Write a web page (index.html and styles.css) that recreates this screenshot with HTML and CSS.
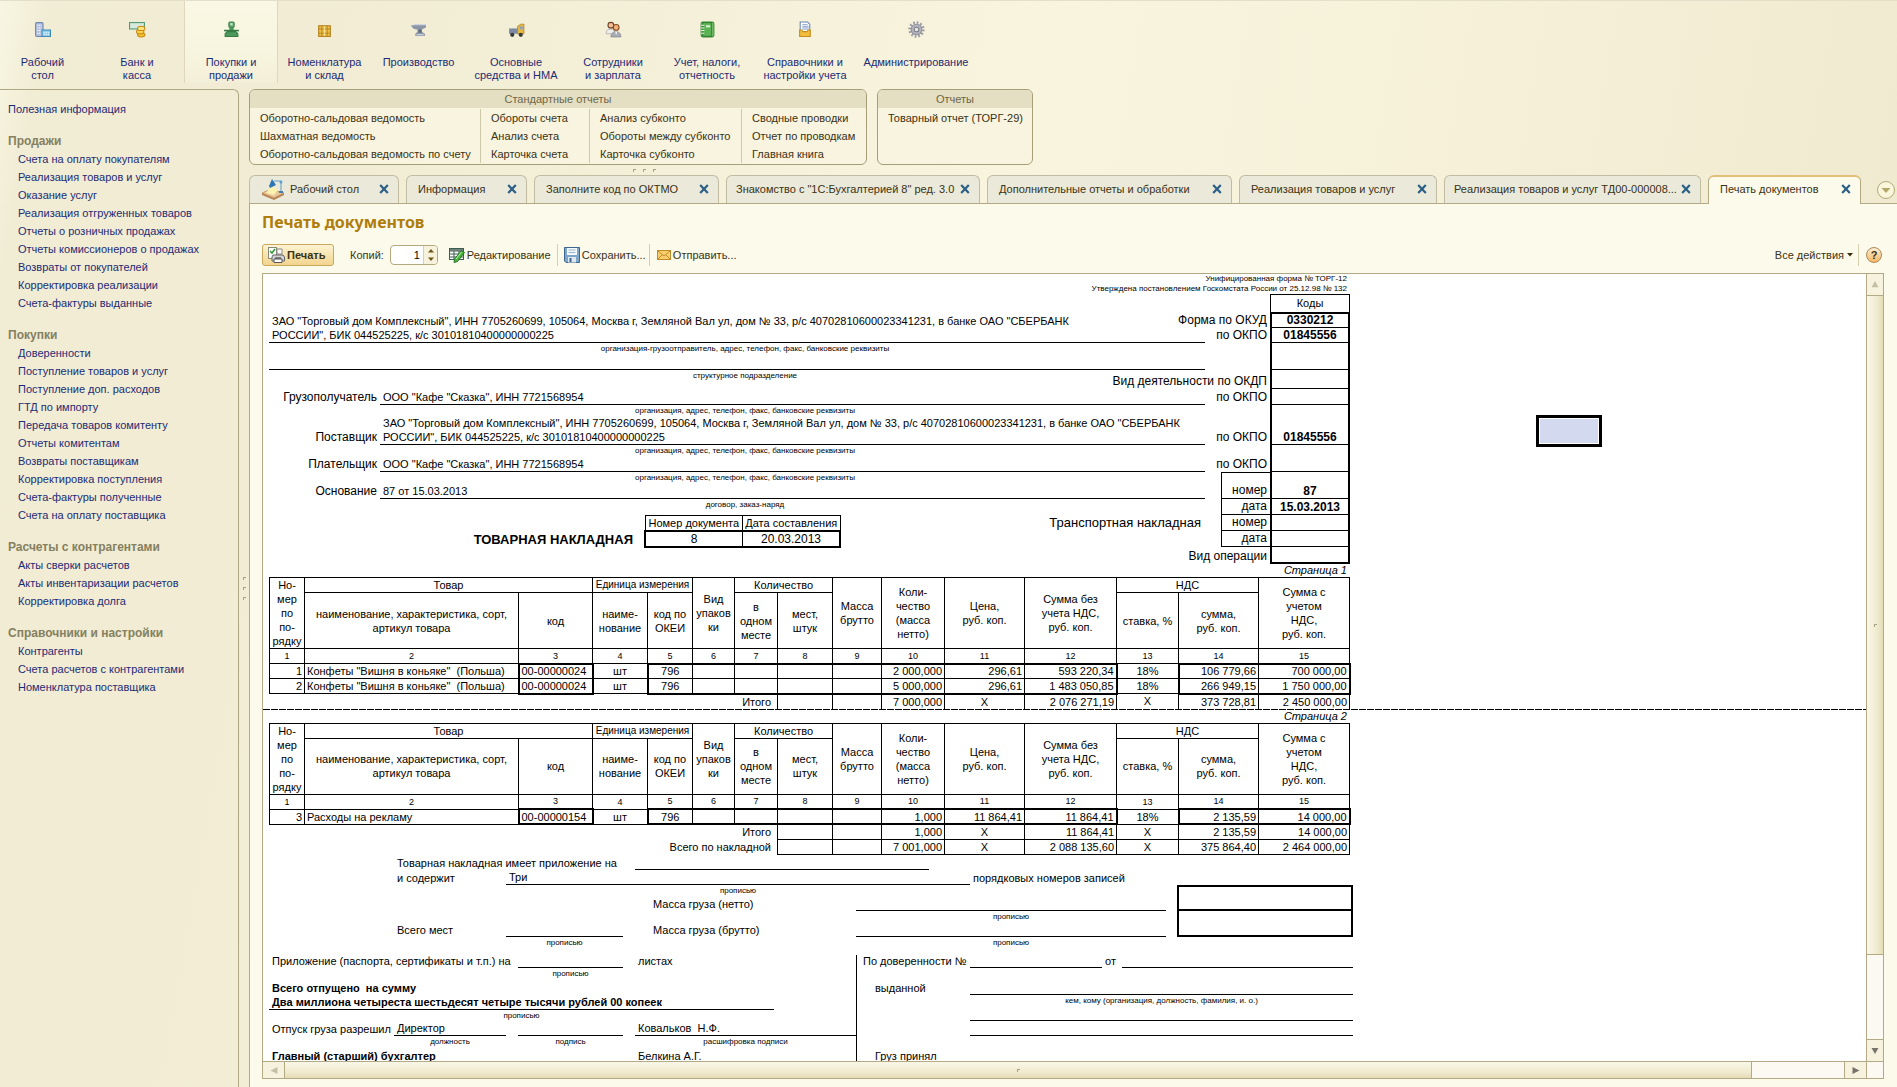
FILE: index.html
```html
<!DOCTYPE html>
<html lang="ru">
<head>
<meta charset="utf-8">
<title>Печать документов</title>
<link rel="stylesheet" href="styles.css">
</head>
<body>
<svg class="defs" aria-hidden="true">
  <symbol id="close" viewBox="0 0 10 10"><path d="M1.200 1l7.600 8M8.800 1L1.200 9" fill="none" stroke="#2b5f86" stroke-width="2.200"/></symbol>
</svg>
<nav class="sections">
  <a class="section" href="#"><svg viewBox="0 0 16 16"><rect x="1.5" y="1.500" width="7" height="13" rx="1" fill="#b5c1dc" stroke="#7286b2"/><path d="M3 4h4M3 6.500h4M3 9h4M3 11.500h4" stroke="#fff" stroke-dasharray="1 .6"/><rect x="7.500" y="8.500" width="8" height="6" fill="#8fd0ec" stroke="#3d86b8"/><path d="M9 11h5M9 13h5" stroke="#fff" stroke-dasharray="1 1"/></svg><span>Рабочий<br>стол</span></a>
  <a class="section" href="#"><svg viewBox="0 0 16 16"><rect x=".5" y="1.500" width="14" height="6" fill="#d7eadb" stroke="#4c9773"/><ellipse cx="11.500" cy="13" rx="3.500" ry="2" fill="#f0c02e" stroke="#c68a13"/><ellipse cx="10.500" cy="10" rx="3.500" ry="2" fill="#f9d34f" stroke="#c68a13"/><ellipse cx="11.500" cy="7" rx="3.500" ry="2" fill="#ffe681" stroke="#c68a13"/></svg><span>Банк и<br>касса</span></a>
  <a class="section current" href="#"><svg viewBox="0 0 16 16"><rect x="5.500" y="1" width="5" height="5" rx="1" fill="#69ad72" stroke="#3a7d49"/><rect x="7" y="2" width="2" height="2" fill="#cfe9cf"/><path d="M6 6h4v4H6z" fill="#4b9a5b"/><path d="M1 9h14" stroke="#357b46" stroke-width="1.500"/><path d="M4 10h8l2 2v2.500H2V12z" fill="#4b9a5b" stroke="#357b46"/></svg><span>Покупки и<br>продажи</span></a>
  <a class="section" href="#"><svg viewBox="0 0 16 16"><rect x="2.500" y="4.500" width="11" height="10" fill="#f0c14c" stroke="#b07f1a"/><path d="M2 7.500h12M2 11.500h12M5.500 4v11M10.500 4v11" stroke="#b98a22"/><path d="M8 5v9" stroke="#f9df8d"/></svg><span>Номенклатура<br>и склад</span></a>
  <a class="section" href="#"><svg viewBox="0 0 16 16"><path d="M1 4h3V3h11v3l-4 2v2l3 2v2H5v-2l2-2V8C4 8 2 7 1 4z" fill="#8b95a5"/><path d="M4 3.500h11M6 13h7" stroke="#dce3ec"/><path d="M8 8h3v3H8z" fill="#5f6a7c"/></svg><span>Производство</span></a>
  <a class="section" href="#"><svg viewBox="0 0 16 16"><rect x="1" y="7" width="8" height="5" fill="#7d8aa2"/><path d="M9 12V5l3-2h3v9z" fill="#e9ba42" stroke="#a87d1d" stroke-width=".7"/><rect x="11" y="5" width="3" height="3" fill="#8fa3b8"/><circle cx="4" cy="13" r="2" fill="#3b3b3b"/><circle cx="12" cy="13" r="2" fill="#3b3b3b"/></svg><span>Основные<br>средства и НМА</span></a>
  <a class="section" href="#"><svg viewBox="0 0 16 16"><circle cx="5.500" cy="4" r="2.700" fill="#f2c19a" stroke="#6d3f24"/><path d="M1 12c0-3 2-4.500 4.500-4.500S9 9 9 12z" fill="#eee" stroke="#999" stroke-width=".6"/><circle cx="10.500" cy="6" r="2.700" fill="#efb17c" stroke="#8b4a1e"/><path d="M5.500 15c0-3 2-5 5-5s4.500 2 4.500 5z" fill="#a9adb4" stroke="#7d8087" stroke-width=".6"/><path d="M9.500 10h2l-1 3z" fill="#fff"/></svg><span>Сотрудники<br>и зарплата</span></a>
  <a class="section" href="#"><svg viewBox="0 0 16 16"><rect x="2" y="1" width="12" height="14" rx="1.500" fill="#8bce7d" stroke="#3d8b39"/><rect x="3.500" y="1.500" width="8.500" height="13" fill="#5cb355" stroke="#2f7d30"/><path d="M6.500 4h4v2h-4z" fill="#d8f2cf"/><path d="M2 4h3M2 6.500h3M2 9h3M2 11.500h3" stroke="#e2f4dc"/></svg><span>Учет, налоги,<br>отчетность</span></a>
  <a class="section" href="#"><svg viewBox="0 0 16 16"><path d="M3 1h7l2 2v8H3z" fill="#fff" stroke="#6a86b5"/><path d="M5 3.500h5M5 5.500h6M5 7.500h6" stroke="#7f9ac8"/><path d="M2.500 8.500h2l1 1.500h4l1-1.500h2v6h-10z" fill="#f3be3e" stroke="#c58d1b"/></svg><span>Справочники и<br>настройки учета</span></a>
  <a class="section" href="#"><svg viewBox="0 0 16 16"><circle cx="8" cy="8" r="6.500" fill="none" stroke="#9b9ca6" stroke-width="2.400" stroke-dasharray="1.700 1.700"/><circle cx="8" cy="8" r="5" fill="#b4b5be" stroke="#8e8f99"/><circle cx="8" cy="8" r="2.200" fill="#e9e8e4" stroke="#7f808b"/></svg><span>Администрирование</span></a>
</nav>
<div class="body">
  <nav class="sidebar">
    <a class="top" href="#">Полезная информация</a>
    <h2>Продажи</h2>
    <a href="#">Счета на оплату покупателям</a><a href="#">Реализация товаров и услуг</a><a href="#">Оказание услуг</a><a href="#">Реализация отгруженных товаров</a><a href="#">Отчеты о розничных продажах</a><a href="#">Отчеты комиссионеров о продажах</a><a href="#">Возвраты от покупателей</a><a href="#">Корректировка реализации</a><a href="#">Счета-фактуры выданные</a>
    <h2>Покупки</h2>
    <a href="#">Доверенности</a><a href="#">Поступление товаров и услуг</a><a href="#">Поступление доп. расходов</a><a href="#">ГТД по импорту</a><a href="#">Передача товаров комитенту</a><a href="#">Отчеты комитентам</a><a href="#">Возвраты поставщикам</a><a href="#">Корректировка поступления</a><a href="#">Счета-фактуры полученные</a><a href="#">Счета на оплату поставщика</a>
    <h2>Расчеты с контрагентами</h2>
    <a href="#">Акты сверки расчетов</a><a href="#">Акты инвентаризации расчетов</a><a href="#">Корректировка долга</a>
    <h2>Справочники и настройки</h2>
    <a href="#">Контрагенты</a><a href="#">Счета расчетов с контрагентами</a><a href="#">Номенклатура поставщика</a>
  </nav>
  <div class="splitter"><i></i><i></i><i></i></div>
  <main class="work">
    <div class="reports">
      <section class="group standard">
        <h3>Стандартные отчеты</h3>
        <div class="cols">
          <div><a href="#">Оборотно-сальдовая ведомость</a><a href="#">Шахматная ведомость</a><a href="#">Оборотно-сальдовая ведомость по счету</a></div>
          <div><a href="#">Обороты счета</a><a href="#">Анализ счета</a><a href="#">Карточка счета</a></div>
          <div><a href="#">Анализ субконто</a><a href="#">Обороты между субконто</a><a href="#">Карточка субконто</a></div>
          <div><a href="#">Сводные проводки</a><a href="#">Отчет по проводкам</a><a href="#">Главная книга</a></div>
        </div>
      </section>
      <section class="group extra">
        <h3>Отчеты</h3>
        <div class="cols"><div><a href="#">Товарный отчет (ТОРГ-29)</a></div></div>
      </section>
    </div>
    <div class="hsplit"><i></i><i></i><i></i></div>
    <div class="tabs">
      <div class="tab t1"><svg class="desk" viewBox="0 0 24 22"><path d="M1 15l9-4 13 4-10 5z" fill="#e9c79a" stroke="#b98a55" stroke-width=".7"/><path d="M1 15v2l12 5v-2zM23 15v2l-10 5v-2z" fill="#b98453"/><path d="M10 8l-5 7 8 2 4-5z" fill="#fdf3b0"/><path d="M11 1l4 6-6 3-1-2z" fill="#2e77b4"/><path d="M13 3h7v10" fill="none" stroke="#5f9cc8"/><circle cx="20" cy="4" r="1.500" fill="#5aa0d0"/><path d="M18 14h4" stroke="#3b7fb5" stroke-width="2"/></svg><a href="#">Рабочий стол</a><button aria-label="Закрыть"><svg><use href="#close"/></svg></button></div>
      <div class="tab t2"><a href="#">Информация</a><button aria-label="Закрыть"><svg><use href="#close"/></svg></button></div>
      <div class="tab t3"><a href="#">Заполните код по ОКТМО</a><button aria-label="Закрыть"><svg><use href="#close"/></svg></button></div>
      <div class="tab t4"><a href="#">Знакомство с "1С:Бухгалтерией 8" ред. 3.0</a><button aria-label="Закрыть"><svg><use href="#close"/></svg></button></div>
      <div class="tab t5"><a href="#">Дополнительные отчеты и обработки</a><button aria-label="Закрыть"><svg><use href="#close"/></svg></button></div>
      <div class="tab t6"><a href="#">Реализация товаров и услуг</a><button aria-label="Закрыть"><svg><use href="#close"/></svg></button></div>
      <div class="tab t7"><a href="#">Реализация товаров и услуг ТД00-000008...</a><button aria-label="Закрыть"><svg><use href="#close"/></svg></button></div>
      <div class="tab t8 active"><a href="#">Печать документов</a><button aria-label="Закрыть"><svg><use href="#close"/></svg></button></div>
      <button class="more" aria-label="Список окон"><svg viewBox="0 0 20 20"><circle cx="10" cy="10" r="8.500" fill="#faf6dc" stroke="#b3a878"/><path d="M5.500 8h9L10 13z" fill="#b3a868"/></svg></button>
    </div>
    <div class="pane">
      <h1>Печать документов</h1>
      <div class="toolbar">
        <button class="print"><svg viewBox="0 0 17 17"><rect x=".5" y=".5" width="8" height="11" fill="#fff" stroke="#8a8a7a"/><path d="M2 4l2 2 3-4" fill="none" stroke="#2f9a3a" stroke-width="1.500"/><path d="M9 2h5v5H9z" fill="#fff" stroke="#888"/><path d="M5 8h10l1.500 2v4H4v-4z" fill="#d3d3d3" stroke="#666"/><path d="M6 12h8v3.500H6z" fill="#fff" stroke="#555"/><path d="M7 11h6" stroke="#333"/></svg>Печать</button>
        <label for="copies">Копий:</label>
        <span class="spin"><input id="copies" type="text" value="1"><span class="arrows"><svg viewBox="0 0 14 18"><path d="M4 6.500h6L7 3zM4 11.500h6L7 15z" fill="#6e5518"/></svg></span></span>
        <button class="cmd edit"><svg viewBox="0 0 16 16"><rect x=".5" y="1.500" width="14" height="11" fill="#fff" stroke="#3d5e50"/><path d="M1 4h13M1 7h13M1 10h13M5 2v10M10 2v10" stroke="#3d5e50"/><path d="M1 2h13v2H1z" fill="#6f7f7a"/><path d="M12.500 3.500l3 2-7 9-3.500 1 .5-3.500z" fill="#49b83a" stroke="#23752a"/><path d="M7 12l5.500-7" stroke="#bff0a6"/></svg>Редактирование</button>
        <button class="cmd save"><svg viewBox="0 0 16 16"><path d="M.5.5h15v15H2l-1.500-1.500z" fill="#7fa6c9" stroke="#3d678f"/><rect x="3" y="1" width="10" height="7" fill="#f4f8fb"/><path d="M4.500 3h7M4.500 5.500h7" stroke="#9cb6cd"/><rect x="4" y="10" width="8" height="5.500" fill="#dfe8ef"/><rect x="5.500" y="11" width="2" height="4" fill="#3d678f"/></svg>Сохранить...</button>
        <button class="cmd mail"><svg viewBox="0 0 14 10"><rect x=".5" y=".5" width="13" height="9" fill="#f9ce6c" stroke="#c08a2a"/><path d="M1 1l6 5 6-5M1 9l4-4M13 9L9 5" fill="none" stroke="#c08a2a"/></svg>Отправить...</button>
        <button class="cmd all">Все действия<svg viewBox="0 0 6 4"><path d="M0 0h6L3 3.500z" fill="#3a2f10"/></svg></button>
        <button class="help" aria-label="Справка">?</button>
      </div>
      <div class="viewer">
        <div class="sheet">
          <div class="paper">
            <div class="form">
              <p class="legal">Унифицированная форма № ТОРГ-12<br>Утверждена постановлением Госкомстата России от 25.12.98 № 132</p>
              <div class="code c2">Коды</div>
              <div class="codes"></div>
              <div class="code c3">0330212</div><div class="code c4">01845556</div><div class="code c5"></div><div class="code c6"></div><div class="code c7"></div><div class="code c8">01845556</div><div class="code c9"></div><div class="code c10">87</div><div class="code c11">15.03.2013</div><div class="code c12"></div><div class="code c13"></div>
              <div class="lab l3">Форма по ОКУД</div><div class="lab l4">по ОКПО</div><div class="lab l6">Вид деятельности по ОКДП</div><div class="lab l7">по ОКПО</div><div class="lab l8">по ОКПО</div><div class="lab l9">по ОКПО</div>
              <div class="lab box l10">номер</div><div class="lab box l11">дата</div><div class="lab box l12">номер</div><div class="lab box l13">дата</div><div class="lab l14">Вид операции</div>
              <div class="fill f4">ЗАО "Торговый дом Комплексный", ИНН 7705260699, 105064, Москва г, Земляной Вал ул, дом № 33, р/с 40702810600023341231, в банке ОАО "СБЕРБАНК<br>РОССИИ", БИК 044525225, к/с 30101810400000000225</div>
              <div class="cap k5">организация-грузоотправитель, адрес, телефон, факс, банковские реквизиты</div>
              <div class="fill f5"></div>
              <div class="cap k6">структурное подразделение</div>
              <div class="who w7">Грузополучатель</div><div class="fill f7">ООО "Кафе "Сказка", ИНН 7721568954</div>
              <div class="cap k8">организация, адрес, телефон, факс, банковские реквизиты</div>
              <div class="who w8">Поставщик</div><div class="fill f8">ЗАО "Торговый дом Комплексный", ИНН 7705260699, 105064, Москва г, Земляной Вал ул, дом № 33, р/с 40702810600023341231, в банке ОАО "СБЕРБАНК<br>РОССИИ", БИК 044525225, к/с 30101810400000000225</div>
              <div class="cap k9">организация, адрес, телефон, факс, банковские реквизиты</div>
              <div class="who w9">Плательщик</div><div class="fill f9">ООО "Кафе "Сказка", ИНН 7721568954</div>
              <div class="cap k10">организация, адрес, телефон, факс, банковские реквизиты</div>
              <div class="who w10">Основание</div><div class="fill f10">87 от 15.03.2013</div>
              <div class="cap k11">договор, заказ-наряд</div>
              <div class="number">
                <strong>ТОВАРНАЯ НАКЛАДНАЯ</strong>
                <table><tr><th>Номер документа</th><th>Дата составления</th></tr><tr><td>8</td><td>20.03.2013</td></tr></table>
                <span>Транспортная накладная</span>
              </div>
            </div>
            <p class="pageno">Страница 1</p>
            <table class="goods">
              <colgroup><col class="w35"><col class="w214"><col class="w74"><col class="w55"><col class="w45"><col class="w42"><col class="w43"><col class="w55"><col class="w49"><col class="w63"><col class="w80"><col class="w92"><col class="w62"><col class="w80"><col class="w91"></colgroup>
              <thead>
              <tr><th rowspan="2">Но-<br>мер<br>по<br>по-<br>рядку</th><th colspan="2">Товар</th><th class="tight" colspan="2">Единица измерения</th><th rowspan="2">Вид<br>упаков<br>ки</th><th colspan="2">Количество</th><th rowspan="2">Масса<br>брутто</th><th rowspan="2">Коли-<br>чество<br>(масса<br>нетто)</th><th rowspan="2">Цена,<br>руб. коп.</th><th rowspan="2">Сумма без<br>учета НДС,<br>руб. коп.</th><th colspan="2">НДС</th><th rowspan="2">Сумма с<br>учетом<br>НДС,<br>руб. коп.</th></tr>
              <tr class="sub"><th>наименование, характеристика, сорт,<br>артикул товара</th><th>код</th><th>наиме-<br>нование</th><th>код по<br>ОКЕИ</th><th>в<br>одном<br>месте</th><th>мест,<br>штук</th><th>ставка, %</th><th>сумма,<br>руб. коп.</th></tr>
              <tr class="nums"><th>1</th><th>2</th><th>3</th><th>4</th><th>5</th><th>6</th><th>7</th><th>8</th><th>9</th><th>10</th><th>11</th><th>12</th><th>13</th><th>14</th><th>15</th></tr>
              </thead>
              <tbody>
              <tr class="first"><td>1</td><td class="l">Конфеты "Вишня в коньяке" &nbsp;(Польша)</td><td class="l tl tr">00-00000024</td><td class="c">шт</td><td class="c tl">796</td><td></td><td></td><td></td><td></td><td>2 000,000</td><td>296,61</td><td class="tr">593 220,34</td><td class="c">18%</td><td class="tl">106 779,66</td><td class="tr">700 000,00</td></tr>
              <tr class="last"><td>2</td><td class="l">Конфеты "Вишня в коньяке" &nbsp;(Польша)</td><td class="l tl tr">00-00000024</td><td class="c">шт</td><td class="c tl">796</td><td></td><td></td><td></td><td></td><td>5 000,000</td><td>296,61</td><td class="tr">1 483 050,85</td><td class="c">18%</td><td class="tl">266 949,15</td><td class="tr">1 750 000,00</td></tr>
              <tr class="total open"><td class="n" colspan="7">Итого</td><td></td><td></td><td>7 000,000</td><td class="c">Х</td><td>2 076 271,19</td><td class="c">Х</td><td>373 728,81</td><td>2 450 000,00</td></tr>
              </tbody>
            </table>
          </div>
          <div class="break"></div>
          <div class="paper">
            <p class="pageno">Страница 2</p>
            <table class="goods">
              <colgroup><col class="w35"><col class="w214"><col class="w74"><col class="w55"><col class="w45"><col class="w42"><col class="w43"><col class="w55"><col class="w49"><col class="w63"><col class="w80"><col class="w92"><col class="w62"><col class="w80"><col class="w91"></colgroup>
              <thead>
              <tr><th rowspan="2">Но-<br>мер<br>по<br>по-<br>рядку</th><th colspan="2">Товар</th><th class="tight" colspan="2">Единица измерения</th><th rowspan="2">Вид<br>упаков<br>ки</th><th colspan="2">Количество</th><th rowspan="2">Масса<br>брутто</th><th rowspan="2">Коли-<br>чество<br>(масса<br>нетто)</th><th rowspan="2">Цена,<br>руб. коп.</th><th rowspan="2">Сумма без<br>учета НДС,<br>руб. коп.</th><th colspan="2">НДС</th><th rowspan="2">Сумма с<br>учетом<br>НДС,<br>руб. коп.</th></tr>
              <tr class="sub"><th>наименование, характеристика, сорт,<br>артикул товара</th><th>код</th><th>наиме-<br>нование</th><th>код по<br>ОКЕИ</th><th>в<br>одном<br>месте</th><th>мест,<br>штук</th><th>ставка, %</th><th>сумма,<br>руб. коп.</th></tr>
              <tr class="nums"><th>1</th><th>2</th><th>3</th><th>4</th><th>5</th><th>6</th><th>7</th><th>8</th><th>9</th><th>10</th><th>11</th><th>12</th><th>13</th><th>14</th><th>15</th></tr>
              </thead>
              <tbody>
              <tr class="first last"><td>3</td><td class="l">Расходы на рекламу</td><td class="l tl tr">00-00000154</td><td class="c">шт</td><td class="c tl">796</td><td></td><td></td><td></td><td></td><td>1,000</td><td>11 864,41</td><td class="tr">11 864,41</td><td class="c">18%</td><td class="tl">2 135,59</td><td class="tr">14 000,00</td></tr>
              <tr class="total"><td class="n" colspan="7">Итого</td><td></td><td></td><td>1,000</td><td class="c">Х</td><td>11 864,41</td><td class="c">Х</td><td>2 135,59</td><td>14 000,00</td></tr>
              <tr class="total"><td class="n" colspan="7">Всего по накладной</td><td></td><td></td><td>7 001,000</td><td class="c">Х</td><td>2 088 135,60</td><td class="c">Х</td><td>375 864,40</td><td>2 464 000,00</td></tr>
              </tbody>
            </table>
            <div class="sign">
              <div class="s1 from2">Товарная накладная имеет приложение на</div><div class="s1 u annex"></div>
              <div class="s2 from2">и содержит</div><div class="s2 u contains">Три</div><div class="s2 from9">порядковых номеров записей</div>
              <div class="cap s3 contains">прописью</div>
              <div class="s3 from6 mass">Масса груза (нетто)</div><div class="s3 u weight"></div><div class="s3 cell"></div>
              <div class="cap s4 weight">прописью</div>
              <div class="s4 from2">Всего мест</div><div class="s4 u places"></div><div class="s4 from6 mass">Масса груза (брутто)</div><div class="s4 u weight"></div><div class="s4 cell"></div>
              <div class="cap s5 places">прописью</div><div class="cap s5 weight">прописью</div>
              <div class="rule"></div>
              <div class="s6 from1">Приложение (паспорта, сертификаты и т.п.) на</div><div class="s6 u short"></div><div class="s6 from6">листах</div>
              <div class="s6 from7">По доверенности №</div><div class="s6 u proxy"></div><div class="s6 from10">от</div><div class="s6 u date"></div>
              <div class="cap s7 short">прописью</div>
              <div class="s7 from1 b">Всего отпущено &nbsp;на сумму</div><div class="s7 from7 deep">выданной</div><div class="s7 u right"></div>
              <div class="cap s8 right">кем, кому (организация, должность, фамилия, и. о.)</div>
              <div class="s8 u sum b">Два миллиона четыреста шестьдесят четыре тысячи рублей 00 копеек</div>
              <div class="cap s9 sum">прописью</div><div class="s9 u right"></div>
              <div class="s10 from1">Отпуск груза разрешил</div><div class="s10 u post">Директор</div><div class="s10 u short"></div><div class="s10 u name">Ковальков &nbsp;Н.Ф.</div><div class="s10 u right"></div>
              <div class="cap s11 post">должность</div><div class="cap s11 short">подпись</div><div class="cap s11 name">расшифровка подписи</div>
              <div class="s11 from1 b">Главный (старший) бухгалтер</div><div class="s11 from6">Белкина А.Г.</div><div class="s11 from7 deep">Груз принял</div>
            </div>
          </div>
          <div class="cursor"></div>
        </div>
        <div class="vbar"><button aria-label="Вверх"><svg viewBox="0 0 8 8"><path d="M0 7h8L4 0z" fill="#c5bfa6"/></svg></button><div class="thumb"><i></i></div><div class="track"></div><button aria-label="Вниз"><svg viewBox="0 0 8 8"><path d="M0 1h8L4 8z" fill="#77736a"/></svg></button></div>
        <div class="hbar"><button aria-label="Влево"><svg viewBox="0 0 8 8"><path d="M8 0v8L0 4z" fill="#c5bfa6"/></svg></button><div class="thumb"><i></i></div><div class="track"></div><button aria-label="Вправо"><svg viewBox="0 0 8 8"><path d="M0 0v8l8-4z" fill="#77736a"/></svg></button></div>
        <div class="corner"></div>
      </div>
    </div>
  </main>
</div>
</body>
</html>
```
FILE: styles.css
```css
* { box-sizing: border-box; }
html, body { height: 100%; }
body {
  margin: 0;
  display: flex;
  flex-direction: column;
  overflow: hidden;
  font: 11px/18px "Liberation Sans", Arial, sans-serif;
  color: #3a3214;
  background: linear-gradient(100deg, #f8f6e3 0, #f1ecd4 50px, #f1ecd3 15%, #f8f4de 50%, #f7f2da 65%, #efe9cf 96%, #f6f2de 100%);
}
a { color: inherit; text-decoration: none; white-space: nowrap; }
h1, h2, h3, p { margin: 0; }
button { font: inherit; color: inherit; border: 0; padding: 0; background: none; }
svg { display: block; flex: none; }
.defs { position: absolute; width: 0; height: 0; }

/* sections */
.sections {
  flex: none;
  display: grid;
  grid-template-columns: 90px 94px 94px 93px 95px 100px 94px 94px 102px 120px;
  height: 89px;
  border-top: 1px solid #e3dfc8;
  color: #1d2b74;
}
.section {
  display: flex;
  flex-direction: column;
  align-items: center;
  gap: 18px;
  padding-top: 20px;
  height: 82px;
  line-height: 13px;
  text-align: center;
}
.section:first-child { padding-right: 5px; }
.section svg { width: 17px; height: 17px; }
.section.current {
  background: linear-gradient(#faf8e4, #f7f4de 70%, #f3eed7);
  border: solid #dcd7bd;
  border-width: 0 1px;
}

.body { flex: 1; display: flex; min-height: 0; }

/* sidebar */
.sidebar {
  flex: none;
  width: 239px;
  padding: 10px 8px;
  display: flex;
  flex-direction: column;
  border: solid #b0a783;
  border-width: 1px 1px 0 0;
  border-radius: 0 6px 0 0;
  color: #1d2b74;
}
.sidebar a { padding-left: 10px; }
.sidebar .top { padding-left: 0; }
.sidebar h2 { margin-top: 14px; font-size: 12px; line-height: 18px; color: #858060; }
.splitter {
  flex: none;
  width: 10px;
  display: flex;
  flex-direction: column;
  align-items: center;
  justify-content: center;
  gap: 7px;
}
.splitter i, .hsplit i, .thumb i { width: 3px; height: 3px; border: solid #a8a284; border-width: 1px 0 0 1px; }

/* reports */
.work { flex: 1; min-width: 0; display: flex; flex-direction: column; }
.reports { flex: none; display: flex; gap: 10px; height: 76px; }
.group { border: 1px solid #a69d79; border-radius: 6px; overflow: hidden; background: #f8f4df; }
.group h3 { height: 18px; background: #e4dec3; font-size: 11px; font-weight: normal; line-height: 19px; text-align: center; color: #6d6746; }
.standard { width: 618px; }
.extra { width: 156px; }
.cols { display: flex; padding-top: 1px; }
.cols div { display: flex; flex-direction: column; padding: 0 10px; border-left: 1px solid #cfc9ab; }
.cols div:first-child { border-left: 0; }
.standard .cols div:nth-child(1) { width: 230px; }
.standard .cols div:nth-child(2) { width: 109px; }
.standard .cols div:nth-child(3) { width: 152px; }
.hsplit { flex: none; height: 10px; width: 790px; display: flex; justify-content: center; align-items: center; gap: 7px; }

/* tabs */
.tabs { flex: none; display: flex; height: 29px; gap: 7px; padding-right: 1px; }
.tab {
  display: flex;
  align-items: center;
  justify-content: space-between;
  min-width: 0;
  margin-bottom: 1px;
  padding: 0 9px 1px 11px;
  border: 1px solid #c1bba2;
  border-bottom: 0;
  border-radius: 6px 6px 0 0;
  background: #eae9da;
}
.tab svg { width: 10px; height: 10px; }
.tab svg.desk { width: 24px; height: 22px; margin-right: 5px; }
.tab.t1 { justify-content: flex-start; }
.tab.t1 button { margin-left: auto; }
.t1 { width: 150px; }
.t2 { width: 121px; }
.t3 { width: 185px; }
.t4 { width: 254px; }
.t5 { width: 245px; }
.t6 { width: 198px; }
.t7 { width: 257px; }
.t8 { width: 153px; }
.tab.t4, .tab.t7 { padding-left: 9px; }
.tab.active { margin-bottom: 0; padding-bottom: 3px; background: #fcfaea; border-color: #b3a985; border-top: 2px solid #e3c077; position: relative; z-index: 1; }
.more { margin-left: auto; }
.more svg { width: 20px; height: 20px; }

/* pane */
.pane {
  flex: 1;
  min-height: 0;
  margin-top: -1px;
  display: flex;
  flex-direction: column;
  padding: 7px 13px 8px 12px;
  background: #fcfaea;
  border: solid #b3a985;
  border-width: 1px 0 0 1px;
}
h1 { font: bold 16px/22px "Noto Sans", sans-serif; color: #b07d0c; }
.toolbar { flex: none; display: flex; align-items: center; height: 22px; margin: 11px 0 7px; }
.print {
  display: flex;
  align-items: center;
  gap: 2px;
  width: 72px;
  height: 22px;
  padding-left: 5px;
  border: 1px solid #c9a85c;
  border-radius: 3px;
  background: linear-gradient(#fdf3d2, #f2d48e);
  font-weight: bold;
}
.print svg { width: 17px; height: 17px; }
.toolbar label { margin: 0 6px 0 16px; }
.spin { display: flex; width: 48px; height: 20px; border: 1px solid #b3a97e; border-radius: 4px; background: #fff; overflow: hidden; }
.spin input { width: 32px; border: 0; padding: 0 3px 0 0; text-align: right; font: 11px "Liberation Sans", Arial, sans-serif; background: none; outline: 0; }
.arrows { width: 15px; border-left: 1px solid #d8d0ae; background: #f6f2dc; }
.arrows svg { width: 14px; height: 18px; }
.cmd { display: flex; align-items: center; gap: 2px; height: 22px; white-space: nowrap; }
.cmd svg { width: 16px; height: 16px; }
.edit { width: 108px; margin-left: 11px; }
.save { width: 92px; padding-left: 6px; border-left: 1px solid #d5cfb0; }
.mail { padding-left: 7px; border-left: 1px solid #d5cfb0; }
.mail svg { width: 14px; height: 12px; }
.all { margin-left: auto; gap: 3px; padding-right: 5px; border-right: 1px solid #d5cfb0; }
.all svg { width: 6px; height: 4px; }
.help {
  width: 16px;
  height: 16px;
  margin: 0 2px 0 7px;
  border: 1px solid #ab8a5a;
  border-radius: 50%;
  background: linear-gradient(#fdeed4, #f3b765);
  font-weight: bold;
  line-height: 14px;
}

/* viewer */
.viewer {
  flex: 1;
  min-height: 0;
  display: grid;
  grid-template: minmax(0, 1fr) 17px / minmax(0, 1fr) 17px;
  border: 1px solid #b3a985;
  background: #fff;
}
.sheet { position: relative; overflow: hidden; color: #000; }
.vbar, .hbar { display: flex; }
.vbar { flex-direction: column; border-left: 1px solid #b3a985; }
.hbar { border-top: 1px solid #b3a985; }
.vbar button, .hbar button { flex: none; display: flex; align-items: center; justify-content: center; background: #f6f2dd; }
.vbar button { height: 21px; }
.hbar button { width: 21px; }
.vbar svg, .hbar svg { width: 8px; height: 7px; }
.thumb { display: flex; align-items: center; justify-content: center; border: solid #b3a985; }
.vbar .thumb { flex: 887; border-width: 1px 0; background: linear-gradient(90deg, #faf7e8, #efeacd 65%, #e3dcb6); }
.hbar .thumb { flex: 941; border-width: 0 1px; background: linear-gradient(#faf7e8, #efeacd 65%, #e3dcb6); }
.track { background: #fbf9f2; }
.vbar .track { flex: 113; border-bottom: 1px solid #b3a985; }
.hbar .track { flex: 59; border-right: 1px solid #b3a985; }
.corner { border: solid #b3a985; border-width: 1px 0 0 1px; background: #fbf9f2; }
.cursor { position: absolute; left: 1273px; top: 141px; width: 66px; height: 32px; border: 3px solid #000; background: #d3d9ee; box-shadow: inset 0 0 0 1px #fff; }

.paper { width: 1087px; padding-left: 6px; line-height: 14px; }
.cap { font-size: 8px; line-height: 12px; text-align: center; white-space: nowrap; }

/* form header */
.form {
  display: grid;
  grid-template-columns: 111px 825px 16px 49px 80px;
  grid-template-rows: 20px 18px 16px 15px 27px 19px 16px 40px 27px 27px 16px 16px 16px 17px;
}
.legal { grid-area: 1 / 2 / 2 / 6; font-size: 8px; line-height: 10px; text-align: right; padding-right: 3px; }
.codes { grid-area: 3 / 5 / 15 / 6; border: 2px solid #000; }
.code { display: flex; align-items: flex-end; justify-content: center; grid-column: 5; border-bottom: 1px solid #000; font-size: 12px; font-weight: bold; }
.c2 { grid-row: 2; border: solid #000; border-width: 1px 1px 0; font-size: 11px; font-weight: normal; }
.c3 { grid-row: 3; }
.c4 { grid-row: 4; }
.c5 { grid-row: 5; }
.c6 { grid-row: 6; }
.c7 { grid-row: 7; }
.c8 { grid-row: 8; }
.c9 { grid-row: 9; }
.c10 { grid-row: 10; }
.c11 { grid-row: 11; }
.c12 { grid-row: 12; }
.c13 { grid-row: 13; }
.code.c2 { align-items: center; line-height: 12px; padding-bottom: 2px; }
.lab { grid-column: 2 / 5; align-self: end; padding-right: 3px; text-align: right; font-size: 12px; line-height: 15px; }
.lab.box { grid-column: 4; align-self: stretch; display: flex; align-items: flex-end; justify-content: flex-end; border: solid #000; border-width: 0 0 1px 1px; }
.l3 { grid-row: 3; }
.l4 { grid-row: 4; }
.l6 { grid-row: 6; }
.l7 { grid-row: 7; }
.l8 { grid-row: 8; }
.l9 { grid-row: 9; }
.l10 { grid-row: 10; }
.lab.l10 { border-top-width: 1px; }
.l11 { grid-row: 11; }
.l12 { grid-row: 12; }
.l13 { grid-row: 13; }
.l14 { grid-row: 14; }
.fill { grid-column: 2; display: flex; align-items: flex-end; border-bottom: 1px solid #000; padding-left: 3px; white-space: nowrap; }
.f4 { grid-area: 2 / 1 / 5 / 3; }
.f5 { grid-area: 5 / 1 / 6 / 3; }
.f7 { grid-row: 7; }
.f8 { grid-row: 8; }
.f9 { grid-row: 9; }
.f10 { grid-row: 10; }
.form .cap { grid-column: 1 / 4; }
.k5 { grid-row: 5; }
.k6 { grid-row: 6; }
.k8 { grid-row: 8; }
.k9 { grid-row: 9; }
.k10 { grid-row: 10; }
.k11 { grid-row: 11; }
.who { grid-column: 1; align-self: end; padding-right: 3px; text-align: right; font-size: 12px; line-height: 15px; }
.w7 { grid-row: 7; }
.w8 { grid-row: 8; }
.w9 { grid-row: 9; }
.w10 { grid-row: 10; }
.number { grid-area: 12 / 1 / 14 / 3; display: grid; grid-template-columns: 375px 197px 1fr; height: 32px; font-size: 12px; }
.number strong { align-self: end; padding-right: 11px; text-align: right; font-size: 13px; line-height: 16px; }
.number span { padding-right: 4px; text-align: right; font-size: 13px; line-height: 16px; }
.number table { width: 197px; height: 33px; border-collapse: collapse; table-layout: fixed; text-align: center; }
.number th, .number td { padding: 0; border: 1px solid #000; white-space: nowrap; }
.number th { font-size: 11px; font-weight: normal; }
.number tr + tr { border: 2px solid #000; }

.pageno { height: 13px; padding-right: 3px; line-height: 13px; text-align: right; font-style: italic; }

/* goods table */
.goods { width: 1081px; border-collapse: collapse; table-layout: fixed; }
.goods th, .goods td { padding: 0 2px; border: 1px solid #000; font-weight: normal; white-space: nowrap; line-height: 14px; }
.goods th { padding: 0; text-align: center; }
.goods td { height: 15px; text-align: right; line-height: 12px; }
.goods td.l { text-align: left; }
.goods td.c { text-align: center; }
.goods td.n { border: 0; padding-right: 6px; }
.goods .sub th { height: 56px; }
.goods .tight { font-size: 10px; }
.goods .nums th { font-size: 9px; height: 15px; line-height: 12px; }
.goods td.tl { border-left-width: 2px; }
.goods td.tr { border-right-width: 2px; }
.goods .first td:nth-child(3), .goods .first td:nth-child(n+5):not(:nth-child(13)) { border-top-width: 2px; }
.goods .last td:nth-child(3), .goods .last td:nth-child(n+5):not(:nth-child(13)) { border-bottom-width: 2px; }
.goods .open td { border-bottom: 0; }
.w35 { width: 35px; }
.w214 { width: 214px; }
.w74 { width: 74px; }
.w55 { width: 55px; }
.w45 { width: 45px; }
.w42 { width: 42px; }
.w43 { width: 43px; }
.w49 { width: 49px; }
.w63 { width: 63px; }
.w80 { width: 80px; }
.w92 { width: 92px; }
.w62 { width: 62px; }
.w91 { width: 91px; }
.break { height: 1px; background: repeating-linear-gradient(90deg, #000 0 7px, #fff 7px 8px); }

/* signatures */
.sign {
  display: grid;
  grid-template-columns: 125px 112px 12px 105px 12px 221px 73px 41px 132px 20px 44px 11px 176px;
  grid-template-rows: 15px 15px 26px 26px 18px 13px 27px 15px 11px 15px 27px;
  white-space: nowrap;
}
.sign div { align-self: end; padding: 0 3px; }
.sign .u { align-self: stretch; display: flex; align-items: flex-end; border-bottom: 1px solid #000; }
.sign .cap { align-self: start; padding: 0; }
.sign .b { font-weight: bold; }
.s1 { grid-row: 1; }
.s2 { grid-row: 2; }
.s3 { grid-row: 3; }
.s4 { grid-row: 4; }
.s5 { grid-row: 5; }
.s6 { grid-row: 6; }
.s7 { grid-row: 7; }
.s8 { grid-row: 8; }
.s9 { grid-row: 9; }
.s10 { grid-row: 10; }
.s11 { grid-row: 11; }
.from1 { grid-column: 1 / 4; }
.from2 { grid-column: 2 / 6; }
.from6 { grid-column: 6; }
.from7 { grid-column: 7 / 9; }
.from9 { grid-column: 9 / 13; }
.from10 { grid-column: 10; }
.annex { grid-column: 6 / 8; }
.contains { grid-column: 3 / 9; }
.weight { grid-column: 7 / 12; }
.places { grid-column: 3 / 5; }
.short { grid-column: 4; }
.proxy { grid-column: 9; }
.date { grid-column: 11 / 14; }
.right { grid-column: 9 / 14; }
.sum { grid-column: 1 / 7; margin-right: 82px; }
.post { grid-column: 2; }
.name { grid-column: 6; }
.sign .mass { padding-left: 18px; }
.sign .from7 { padding-left: 7px; }
.sign .deep { padding-left: 19px; }
.sign .cell { grid-column: 13; align-self: stretch; border: 2px solid #000; }
.sign .s4.cell { margin-top: -2px; }
.sign .rule { grid-area: 6 / 7 / 12 / 8; align-self: stretch; border-left: 1px solid #000; }
```
